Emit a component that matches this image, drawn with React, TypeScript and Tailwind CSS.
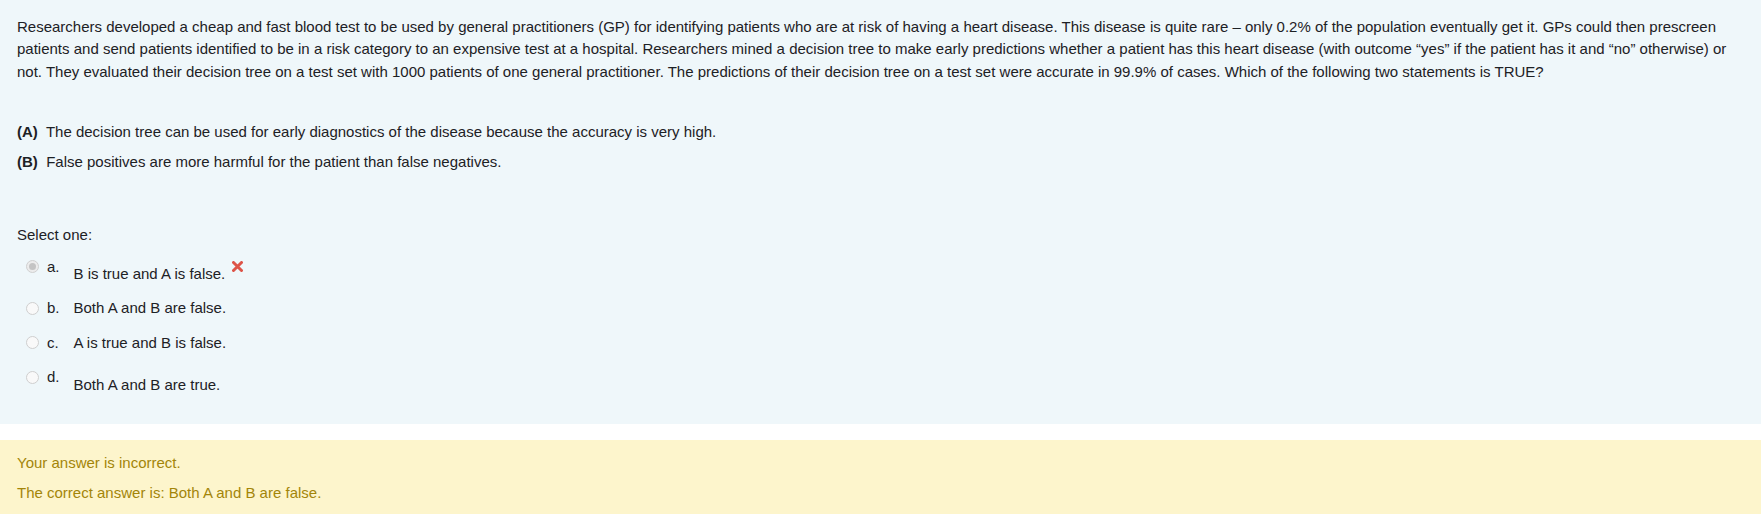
import type { ReactNode } from "react";

const OPTIONS: {
  key: string;
  text: string;
  checked?: boolean;
  wrong?: boolean;
  offset: string;
}[] = [
  { key: "a", text: "B is true and A is false.", checked: true, wrong: true, offset: "pt-[7px]" },
  { key: "b", text: "Both A and B are false.", offset: "pt-0" },
  { key: "c", text: "A is true and B is false.", offset: "pt-0" },
  { key: "d", text: "Both A and B are true.", offset: "pt-[8px]" },
];

function Radio({ checked }: { checked?: boolean }) {
  return (
    <span className="h-[22.5px] flex items-center">
      <span
        className={`w-[13px] h-[13px] rounded-full border flex items-center justify-center ${
          checked ? "border-[#d0d0d0] bg-[#ececec]" : "border-[#cfcfcf] bg-[#f9f9f9]"
        }`}
      >
        {checked && <span className="w-[7px] h-[7px] rounded-full bg-[#c4c4c4]" />}
      </span>
    </span>
  );
}

function WrongMark() {
  return (
    <span className="h-[22.5px] flex items-center ml-[7px]">
      <svg width="11" height="11" viewBox="0 0 11 11">
        <path d="M1.5 1.5 L9.5 9.5 M9.5 1.5 L1.5 9.5" stroke="#dd5448" strokeWidth="3" strokeLinecap="round" />
      </svg>
    </span>
  );
}

function Statement({ tag, children }: { tag: string; children: ReactNode }) {
  return (
    <p>
      <b>{tag}</b>
      {"\u00a0 "}
      {children}
    </p>
  );
}

export default function App() {
  return (
    <div className="w-[1761px] h-[514px] bg-white text-[15px] leading-[22.5px] text-[#1d2125] font-['Liberation_Sans',Arial,sans-serif] overflow-hidden">
      {/* question */}
      <div className="bg-[#eff7fa] px-[17px] pt-[15.5px] pb-[27px]">
        <p>
          Researchers developed a cheap and fast blood test to be used by general practitioners (GP) for identifying patients who are at risk of having a heart disease. This disease is quite rare – only 0.2% of the population eventually get it. GPs could then prescreen patients and send patients identified to be in a risk category to an expensive test at a hospital. Researchers mined a decision tree to make early predictions whether a patient has this heart disease (with outcome “yes” if the patient has it and “no” otherwise) or not. They evaluated their decision tree on a test set with 1000 patients of one general practitioner. The predictions of their decision tree on a test set were accurate in 99.9% of cases. Which of the following two statements is TRUE?
        </p>

        <div className="mt-[38px] flex flex-col gap-[7.5px]">
          <Statement tag="(A)">
            The decision tree can be used for early diagnostics of the disease because the accuracy is very high.
          </Statement>
          <Statement tag="(B)">False positives are more harmful for the patient than false negatives.</Statement>
        </div>

        <p className="mt-[50px] mb-[9.5px]">Select one:</p>

        <div className="flex flex-col gap-[12px]">
          {OPTIONS.map((o) => (
            <div key={o.key} className="flex items-start pl-[9px]">
              <Radio checked={o.checked} />
              <span className="ml-[8px] w-[26.5px]">{o.key}.</span>
              <span className={o.offset}>{o.text}</span>
              {o.wrong && <WrongMark />}
            </div>
          ))}
        </div>
      </div>

      {/* feedback */}
      <div className="mt-[16px] bg-[#fdf5cc] text-[#a38509] px-[17px] pt-[12px] pb-[12px]">
        <p>Your answer is incorrect.</p>
        <p className="mt-[8px]">The correct answer is: Both A and B are false.</p>
      </div>
    </div>
  );
}
